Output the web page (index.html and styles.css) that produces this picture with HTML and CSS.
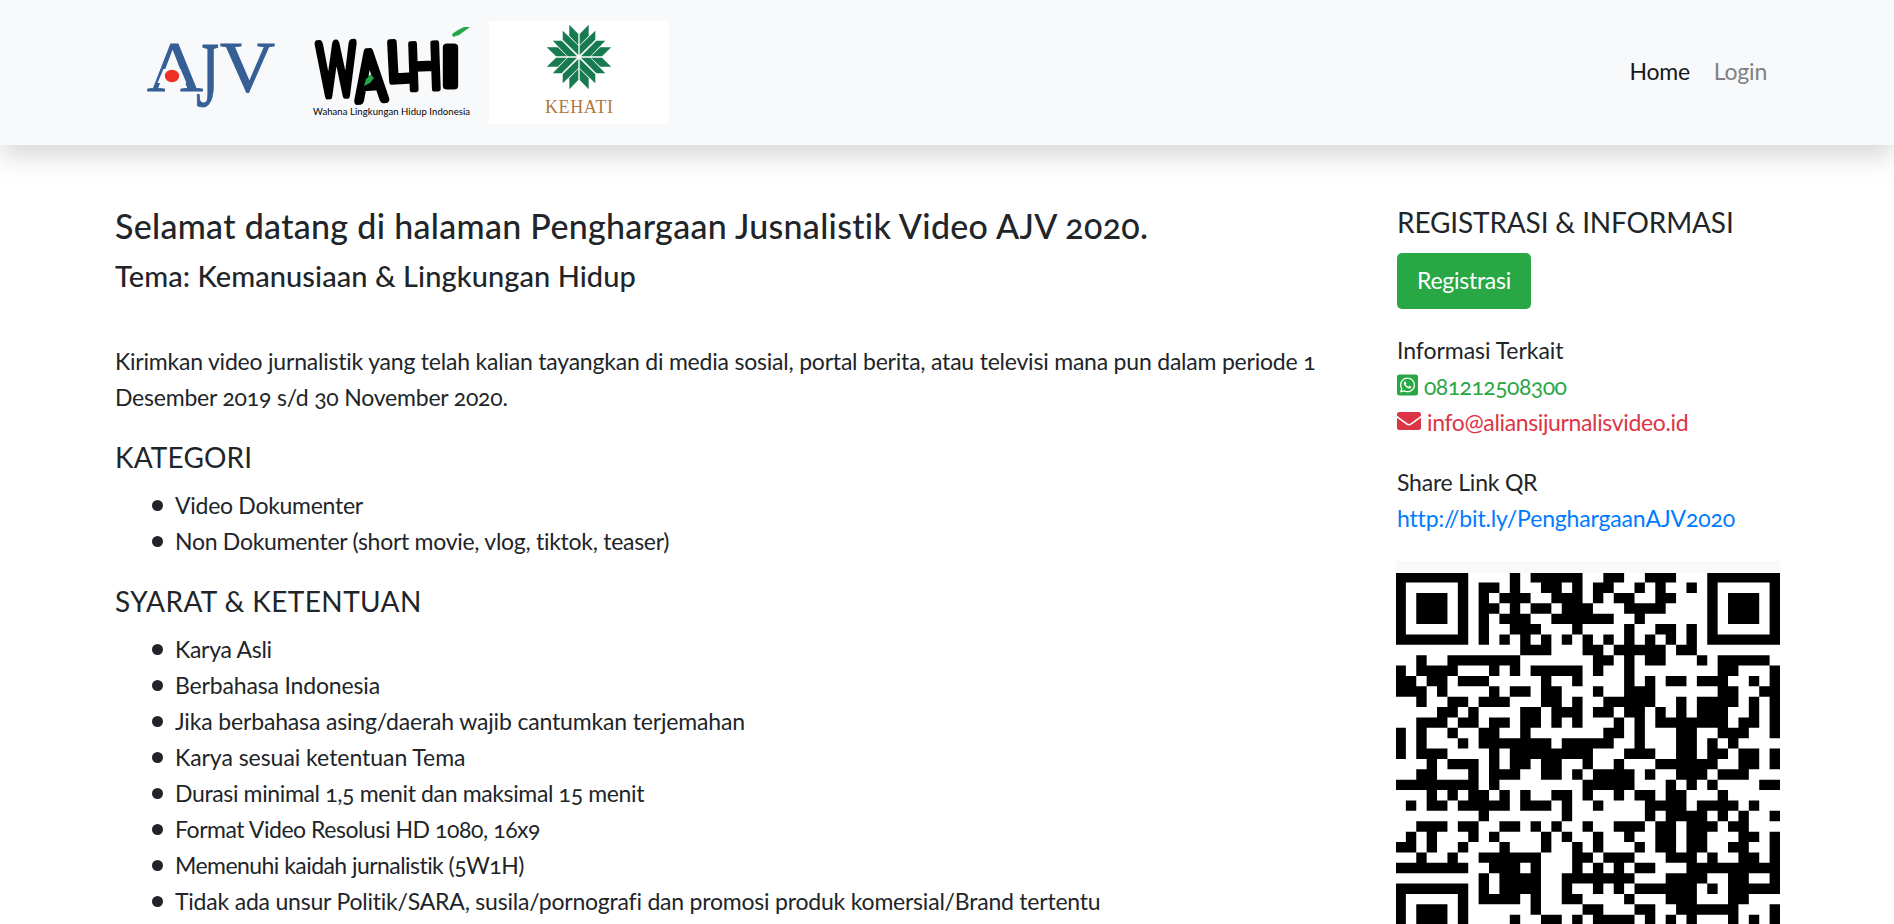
FILE: index.html
```html
<!DOCTYPE html>
<html lang="id">
<head>
<meta charset="utf-8">
<title>Penghargaan Jurnalistik Video AJV 2020</title>
<link rel="stylesheet" href="styles.css">
</head>
<body>
<header class="navbar">
  <div class="brand">
    <svg class="logo-ajv" viewBox="139 21 162 103">
      <g class="ajv-letters">
        <text x="147" y="91" font-size="71" textLength="56" lengthAdjust="spacingAndGlyphs">A</text>
        <text x="196" y="106" font-size="94" textLength="23" lengthAdjust="spacingAndGlyphs">J</text>
        <text x="220" y="91" font-size="71" textLength="55" lengthAdjust="spacingAndGlyphs">V</text>
      </g>
      <path class="ajv-gap" d="M163.500 69L180.500 69L186.500 83L157.500 83Z"/>
      <ellipse cx="172" cy="76" rx="7.2" ry="6.2" fill="#ee3124"/>
    </svg>
    <svg class="logo-walhi" viewBox="301 21 188 103">
      <path fill="#22a84b" d="M364 87V80L367 76L373 74L375 79L369 84Z"/>
      <g class="walhi-letters">
        <text x="317" y="95" font-size="72" stroke-width="8" textLength="39" lengthAdjust="spacingAndGlyphs" transform="rotate(-2 336 68)">W</text>
        <text x="355" y="100" font-size="67" stroke-width="8" textLength="30" lengthAdjust="spacingAndGlyphs" transform="rotate(-4 370 76)">A</text>
        <text x="387" y="81" font-size="54" stroke-width="7" textLength="22" lengthAdjust="spacingAndGlyphs" transform="rotate(-3 398 60)">L</text>
        <text x="407" y="89" font-size="63" stroke-width="6" textLength="35" lengthAdjust="spacingAndGlyphs" transform="rotate(-2 425 66)">H</text>
        <text x="441" y="86" font-size="54" stroke-width="7" textLength="19" lengthAdjust="spacingAndGlyphs">I</text>
      </g>
      <path fill="#22a84b" d="M364 86L366 79L371 75L374 78L370 83Z"/>
      <path fill="#22a84b" d="M452 34L458 30L464 27L470 27L466 30L459 35L453 37Z"/>
      <text class="walhi-sub" x="313" y="115" textLength="157">Wahana Lingkungan Hidup Indonesia</text>
    </svg>
    <svg class="logo-kehati" viewBox="489 21 180 103">
      <defs>
        <g id="petals">
          <path d="M-9.700-32.200L-.7-23V-12L-9.700-21.300Z"/>
          <path d="M-16.300-26.300L-.7-11.300V-2L-16.300-17.300Z"/>
        </g>
        <g id="quarter">
          <use href="#petals"/>
          <use href="#petals" transform="matrix(0 1 1 0 0 0)"/>
        </g>
      </defs>
      <g transform="translate(579 57)" fill="#177a50">
        <use href="#quarter"/>
        <use href="#quarter" transform="scale(-1 1)"/>
        <use href="#quarter" transform="scale(1 -1)"/>
        <use href="#quarter" transform="scale(-1 -1)"/>
      </g>
      <text class="kehati-name" x="545" y="113" textLength="68">KEHATI</text>
    </svg>
  </div>
  <nav class="menu">
    <a class="active t1">Home</a>
    <a>Login</a>
  </nav>
</header>

<main class="page">
  <section class="content">
    <h1>Selamat datang di halaman Penghargaan Jusnalistik Video AJV 2020.</h1>
    <h2>Tema: Kemanusiaan &amp; Lingkungan Hidup</h2>
    <p class="intro">Kirimkan video jurnalistik yang telah kalian tayangkan di media sosial, portal berita, atau televisi mana pun dalam periode 1<br>Desember 2019 s/d 30 November 2020.</p>
    <h3 class="w2">KATEGORI</h3>
    <ul>
      <li class="t1">Video Dokumenter</li>
      <li class="t1">Non Dokumenter (short movie, vlog, tiktok, teaser)</li>
    </ul>
    <h3 class="w3">SYARAT &amp; KETENTUAN</h3>
    <ul>
      <li class="t1">Karya Asli</li>
      <li class="t0">Berbahasa Indonesia</li>
      <li class="t0">Jika berbahasa asing/daerah wajib cantumkan terjemahan</li>
      <li class="tn">Karya sesuai ketentuan Tema</li>
      <li class="t2">Durasi minimal 1,5 menit dan maksimal 15 menit</li>
      <li class="t3">Format Video Resolusi HD 1080, 16x9</li>
      <li class="t4">Memenuhi kaidah jurnalistik (5W1H)</li>
      <li>Tidak ada unsur Politik/SARA, susila/pornografi dan promosi produk komersial/Brand tertentu</li>
    </ul>
  </section>

  <aside class="side">
    <h3 class="w1">REGISTRASI &amp; INFORMASI</h3>
    <a class="btn t1">Registrasi</a>
    <div class="info">
      <div class="tn">Informasi Terkait</div>
      <a class="row phone"><svg width="21" height="24" viewBox="0 0 448 512"><path d="M224 122.800c-72.700 0-131.800 59.100-131.900 131.800 0 24.900 7 49.200 20.200 70.100l3.100 5-13.300 48.600 49.900-13.100 4.800 2.900c20.200 12 43.400 18.400 67.100 18.400h.1c72.600 0 133.300-59.100 133.300-131.800 0-35.200-15.200-68.300-40.100-93.200-25-25-58-38.700-93.200-38.700zm77.500 188.400c-3.300 9.300-19.100 17.700-26.700 18.800-12.600 1.900-22.400.9-47.500-9.900-39.700-17.200-65.700-57.200-67.700-59.800-2-2.600-16.200-21.500-16.200-41s10.200-29.100 13.900-33.100c3.600-4 7.900-5 10.600-5 2.600 0 5.300 0 7.600.1 2.400.1 5.700-.9 8.900 6.800 3.300 7.900 11.200 27.400 12.200 29.400s1.700 4.300.3 6.900c-7.600 15.200-15.700 14.600-11.600 21.600 15.300 26.300 30.600 35.400 53.900 47.100 4 2 6.300 1.700 8.600-1 2.300-2.600 9.900-11.600 12.500-15.500 2.600-4 5.300-3.300 8.900-2 3.600 1.300 23.100 10.900 27.100 12.900s6.600 3 7.600 4.600c.9 1.900.9 9.900-2.400 19.100zM400 32H48C21.500 32 0 53.500 0 80v352c0 26.500 21.500 48 48 48h352c26.500 0 48-21.500 48-48V80c0-26.500-21.500-48-48-48zM223.900 413.200c-26.600 0-52.700-6.700-75.800-19.300L64 416l22.500-82.200c-13.900-24-21.200-51.300-21.200-79.300C65.400 167.100 136.500 96 223.900 96c42.400 0 82.200 16.500 112.200 46.500 29.900 30 47.900 69.800 47.900 112.200 0 87.400-72.700 158.500-160.100 158.500z"/></svg><span class="t4">081212508300</span></a>
      <a class="row mail"><svg width="24" height="24" viewBox="0 0 512 512"><path d="M502.300 190.800c3.900-3.100 9.700-.2 9.700 4.700V400c0 26.500-21.500 48-48 48H48c-26.500 0-48-21.500-48-48V195.600c0-5 5.700-7.800 9.700-4.700 22.400 17.400 52.100 39.500 154.100 113.600 21.100 15.400 56.700 47.800 92.200 47.600 35.700.3 72-32.800 92.300-47.600 102-74.100 131.600-96.300 154-113.700zM256 320c23.200.4 56.600-29.200 73.400-41.400 132.700-96.300 142.800-104.700 173.400-128.700 5.800-4.500 9.200-11.500 9.200-18.900v-19c0-26.500-21.500-48-48-48H48C21.500 64 0 85.500 0 112v19c0 7.400 3.400 14.300 9.200 18.900 30.600 23.900 40.700 32.400 173.400 128.700 16.800 12.200 50.200 41.800 73.400 41.400z"/></svg><span class="t2">info@aliansijurnalisvideo.id</span></a>
    </div>
    <div class="share">
      <div>Share Link QR</div>
      <a class="link t0">http://bit.ly/PenghargaanAJV2020</a>
    </div>
    <div class="qr">
      <svg viewBox="0.05 0.08 36.950 33.820" preserveAspectRatio="none"><path id="modules"/></svg>
    </div>
  </aside>
</main>
<script src="qr.js"></script>
</body>
</html>
```
FILE: qr.js
```js
// Dark modules of each QR row, as inclusive column ranges.
const rows = [
  "0-6 11 13-17 20-21 24-26 30-36",
  "0 6 8-9 11 14-15 17 19-20 23 25 28 30 36",
  "0 2-4 6 8 10-12 15-17 19 21-22 25-26 30 32-34 36",
  "0 2-4 6 8-9 11 13-14 16-18 22-25 30 32-34 36",
  "0 2-4 6 8 10-12 15-20 23 30 32-34 36",
  "0 6 8 11-13 17 22 25-26 28 30 36",
  "0-6 8 10 12 14 16 18 20 22 24 26 28 30-36",
  "12-14 18-19 21-25 27-28",
  "2 5-11 19-20 22 24-25 29 31-35",
  "0 2-5 9 11 13-17 19 22 31-32 36",
  "0-1 3-4 6-8 14 17 22 24 26-27 29-31 34 36",
  "0-2 4 9 11-12 14-15 19 22-24 31-32 35-36",
  "2 5-6 8-10 14-15 17 20-24 27 29-32 34 36",
  "4-5 7 12-13 15-17 19-20 22-23 25 27 29-31 34 36",
  "2-4 6-7 9-10 12-13 15 17 21 23 25-31 33-34 36",
  "0 2 5 8-9 12 20-21 23 27-28 31-33 36",
  "0 2 6 8-14 16-20 23 27-28 30 32",
  "0 2-4 9 11-18 22-24 27-28 30-31 33-34 36",
  "3 5-7 9 11-12 14-15 18 21 25-30 33-34 36",
  "2-3 7 9-11 14-15 17 19-22 24 27-29 31-33",
  "0-7 9 18-22 26 28 30 35-36",
  "3 5 7-8 10 12 15-16 18 21 23-24 26-27 31",
  "1 3-4 6-10 12-14 16 19 24-27 29-32 34",
  "8 16 24 26-29 31 33 36",
  "2-4 6-7 10-11 13 15 18 21-23 25-26 28-30 32-33",
  "1 3 7 9 14 16 19 22 25-26 28-29 33-34 36",
  "0-1 3 6 10 14 17 19 23 25-26 28-29 32-33 36",
  "2 5 8-13 17-18 20-22 26-28 30 33-34 36",
  "0-6 9-11 13 17 19 21 23-24 28-36",
  "8 10-13 16-22 26-29 32-33 36",
  "0-6 8 10-13 16 19 21 23-28 30 32-36",
  "0 6 8-11 13 16-17 22 26-28 32-33",
  "0 2-4 6 13 18-19 23-24 27-32 36",
  "0 2-4 6 11 14-15 17 19-22 24 26 28 32 34 36"
];
let d = "";
rows.forEach((row, y) => {
  for (const run of row.split(" ")) {
    const [a, b = a] = run.split("-").map(Number);
    d += `M${a} ${y + 0.5}H${b + 1}`;
  }
});
document.getElementById("modules").setAttribute("d", d);
```
FILE: styles.css
```css
* { box-sizing: border-box; }
body {
  margin: 0;
  height: 924px;
  overflow: hidden;
  background: #fff;
  color: #212529;
  font: 23px/36px Lato, sans-serif;
  font-variant-numeric: oldstyle-nums;
  letter-spacing: -.21px;
}
.navbar {
  position: relative;
  display: flex;
  justify-content: space-between;
  align-items: flex-start;
  height: 145px;
  padding: 21px 127px 0 139px;
  background: #f8f9fb;
  box-shadow: 0 12px 24px rgba(0, 0, 0, .15);
}
.brand { display: flex; }
.brand svg { display: block; height: 103px; }
.logo-ajv { width: 162px; }
.logo-walhi { width: 188px; }
.logo-kehati { width: 180px; background: #fff; }
.ajv-letters { font-family: "Liberation Serif", serif; letter-spacing: 0; fill: #365f96; stroke: #365f96; stroke-width: 1; }
.ajv-gap { fill: #f8f9fb; }
.walhi-letters { font-family: Lato, sans-serif; letter-spacing: 0; fill: #000; stroke: #000; stroke-linejoin: round; }
.walhi-sub { font: 9.5px Lato, sans-serif; letter-spacing: 0; fill: #000; }
.kehati-name { font: 18px "Liberation Serif", serif; letter-spacing: 0; fill: #b0793c; }
.menu { display: flex; gap: 24px; padding-top: 32px; color: #808182; }
.menu .active { color: #17181a; }

.page { display: flex; padding: 59px 112px 0 115px; }
.content { flex: none; width: 1281px; white-space: nowrap; }
.side { flex: none; width: 386px; white-space: nowrap; }
h1, h2, h3, p, ul { margin: 0; }
h1 { font-size: 34px; line-height: 43px; font-weight: 500; letter-spacing: .3px; }
h2 { margin-top: 11px; font-size: 29px; line-height: 36px; font-weight: 500; letter-spacing: .06px; }
h3 { margin: 24px 0 12px; font-size: 28px; line-height: 36px; font-weight: 400; }
.intro { margin-top: 49px; margin-bottom: -1px; }
ul { padding: 0; list-style: none; }
li { display: flex; align-items: center; gap: 12px; padding-left: 37px; }
li::before { content: ""; width: 11px; height: 11px; border-radius: 50%; background: #212529; }
.content h3 { margin: 25px 0 12px; }
.content ul { margin-bottom: -1px; }
.side h3 { margin: 0 0 13px 1px; }
.btn {
  display: block;
  width: 134px;
  height: 56px;
  margin-left: 1px;
  border-radius: 5px;
  background: #28a745;
  color: #fff;
  line-height: 54px;
  text-align: center;
}
.info { margin: 23px 0 0 1px; }
.row { display: flex; align-items: center; gap: 6px; }
.row svg { display: block; fill: currentColor; margin-top: -2px; }
.phone { color: #28a745; }
.mail { color: #dc3545; }
.share { margin: 24px 0 0 1px; }
.link { display: block; color: #007bff; }
.qr { width: 384px; margin-top: 25px; padding-top: 12px; background: #f8f9fa; }
.qr svg { display: block; width: 384px; height: 351px; background: #fff; }
.qr path { stroke: #000; stroke-width: 1; }

.tn { letter-spacing: -.04px; }
.t0 { letter-spacing: -.16px; }
.t1 { letter-spacing: -.28px; }
.t2 { letter-spacing: -.36px; }
.t3 { letter-spacing: -.45px; }
.t4 { letter-spacing: -.55px; }
.w1 { letter-spacing: -.15px; }
.w2 { letter-spacing: .15px; }
.w3 { letter-spacing: .4px; }
```
